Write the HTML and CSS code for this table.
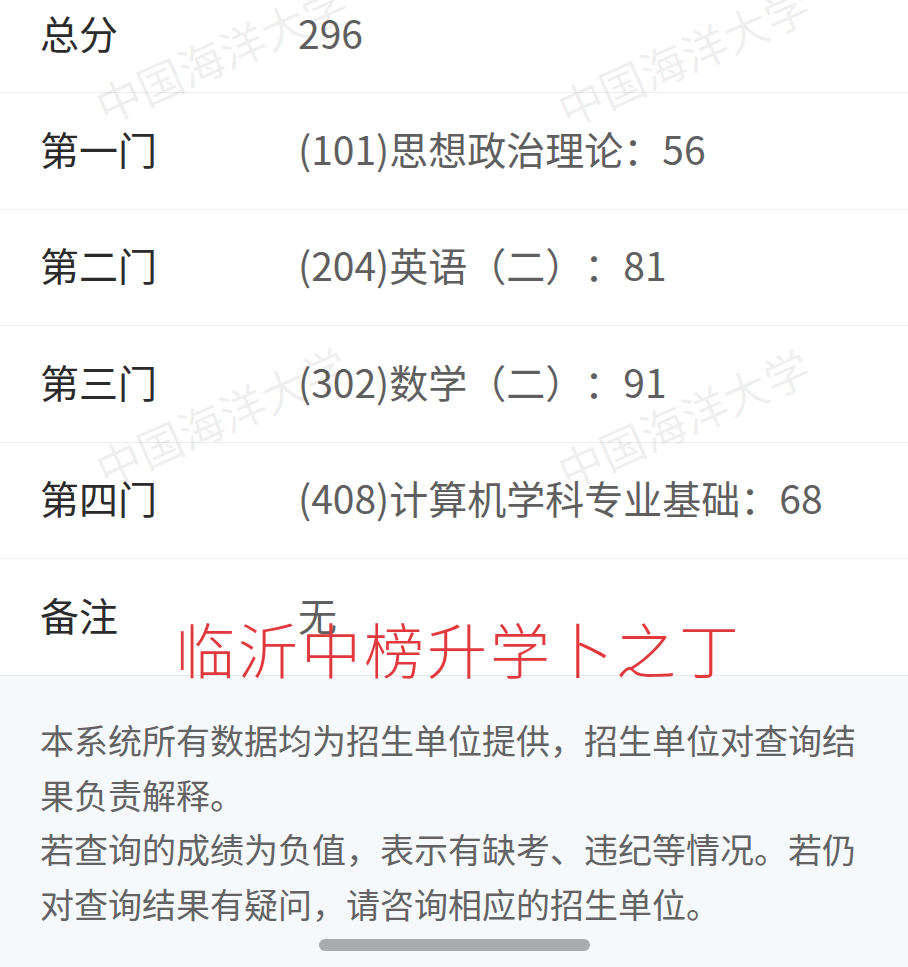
FILE: index.html
```html
<!DOCTYPE html>
<html lang="zh-CN">
<head>
<meta charset="utf-8">
<title>成绩查询</title>
<link rel="stylesheet" href="styles.css">
</head>
<body>
<div class="page">
  <div class="list">
    <div class="row"><div class="label">总分</div><div class="value">296</div></div>
    <div class="row"><div class="label">第一门</div><div class="value">(101)思想政治理论：56</div></div>
    <div class="row"><div class="label">第二门</div><div class="value">(204)英语（二）：81</div></div>
    <div class="row"><div class="label">第三门</div><div class="value">(302)数学（二）：91</div></div>
    <div class="row"><div class="label">第四门</div><div class="value">(408)计算机学科专业基础：68</div></div>
    <div class="row"><div class="label">备注</div><div class="value">无</div></div>
  </div>
  <div class="notice">
    <p class="notice-text">本系统所有数据均为招生单位提供，招生单位对查询结果负责解释。<br>若查询的成绩为负值，表示有缺考、违纪等情况。若仍对查询结果有疑问，请咨询相应的招生单位。</p>
    <div class="home-bar"></div>
  </div>
  <div class="watermark wm-1">中国海洋大学</div>
  <div class="watermark wm-2">中国海洋大学</div>
  <div class="watermark wm-3">中国海洋大学</div>
  <div class="watermark wm-4">中国海洋大学</div>
  <div class="stamp">临沂中榜升学卜之丁</div>
</div>
</body>
</html>
```
FILE: styles.css
```css
html, body {
  margin: 0;
  padding: 0;
  background: #ffffff;
}
body {
  font-family: "Noto Sans CJK SC", "Noto Sans", sans-serif;
  overflow: hidden;
  width: 908px;
  height: 967px;
  text-spacing-trim: space-all;
}
.page {
  position: relative;
  width: 908px;
  height: 967px;
  overflow: hidden;
  display: flex;
  flex-direction: column;
}
.list {
  margin-top: -23px;
}
.row {
  box-sizing: border-box;
  height: 116.4px;
  border-bottom: 1px solid #efefef;
  display: flex;
  align-items: center;
  padding-left: 40px;
  padding-bottom: 6px;
  font-size: 39px;
}
.row:last-child {
  border-bottom: none;
}
.label {
  width: 258px;
  color: #2b2b2b;
}
.value {
  color: #5f5f5f;
}
.notice {
  flex: 1;
  background: #f6f9fc;
  border-top: 1px solid #e6e8ea;
  padding: 37px 40px 0 40px;
  display: flex;
  flex-direction: column;
}
.notice-text {
  margin: 0;
  font-size: 34px;
  line-height: 54.5px;
  color: #636363;
}
.home-bar {
  align-self: center;
  width: 271px;
  height: 12px;
  border-radius: 6px;
  background: #a9acaf;
  margin-top: 8px;
}
.watermark {
  position: absolute;
  width: 270px;
  height: 45px;
  line-height: 45px;
  font-size: 45px;
  color: rgba(0, 0, 0, 0.08);
  white-space: nowrap;
  transform: rotate(-24deg);
  pointer-events: none;
}
.wm-1 { left: 86px; top: 30px; }
.wm-2 { left: 548px; top: 33px; }
.wm-3 { left: 86px; top: 393px; }
.wm-4 { left: 548px; top: 395px; }
.stamp {
  position: absolute;
  left: 175px;
  top: 612px;
  font-size: 60px;
  line-height: 72px;
  letter-spacing: 3px;
  color: #e0383c;
  font-weight: 300;
  white-space: nowrap;
}
```
